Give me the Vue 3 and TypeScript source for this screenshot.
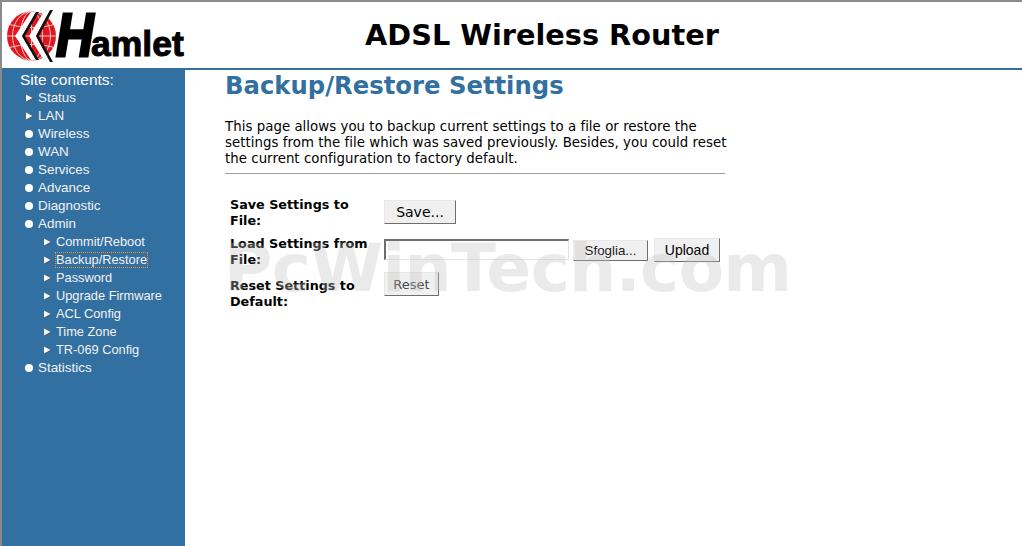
<template>
  <div class="page">
    <header class="top">
      <div class="logo">
        <svg class="globe" viewBox="0 0 50 52" width="50" height="52">
          <defs>
            <clipPath id="disc"><circle cx="24.5" cy="26" r="24.5" /></clipPath>
          </defs>
          <circle cx="24.5" cy="26" r="24.5" fill="#e0161e" />
          <g clip-path="url(#disc)" fill="none" stroke="#f6c4c6" stroke-width="1">
            <ellipse cx="24.5" cy="26" rx="11" ry="24.5" />
            <ellipse cx="24.5" cy="26" rx="19" ry="24.5" />
            <path d="M0 14q25 7 50 0M0 26h50M0 38q25-7 50 0M24.5 1v50" />
          </g>
          <path d="M8 26 24 2h5L15 26l14 24h-5z" fill="#fff" />
          <path d="M15 26 29 2h3L18 26l14 24h-3z" fill="#111" />
          <path d="M22 26 38 0h5L29 26l14 26h-5z" fill="#fff" />
          <path d="M29 26 43 0h3L32 26l14 26h-3z" fill="#111" />
        </svg>
        <span class="brand"><span class="brand-h">H</span>amlet</span>
      </div>
      <div class="product">ADSL Wireless Router</div>
    </header>
    <div class="main">
      <nav class="side">
        <div class="side-title">Site contents:</div>
        <div
          v-for="item in menu"
          :key="item.label"
          class="item"
          :class="{ sub: item.sub }"
        >
          <svg v-if="item.kind === 'arrow'" class="mark" viewBox="0 0 9 9" width="9" height="9">
            <path d="M1 .5 8.5 4.5 1 8.5z" fill="#555" />
            <path d="M1 .5 7.5 4 1 7.5z" fill="#f4f4f4" />
          </svg>
          <span v-else class="dot"></span>
          <span class="label" :class="{ focus: item.focus }">{{ item.label }}</span>
        </div>
      </nav>
      <main class="content">
        <h1>Backup/Restore Settings</h1>
        <p class="intro">
          This page allows you to backup current settings to a file or restore the
          settings from the file which was saved previously. Besides, you could reset
          the current configuration to factory default.
        </p>
        <div class="rule"></div>
        <div class="form">
          <div class="row row-save">
            <div class="name">Save Settings to File:</div>
            <button class="btn btn-save">Save...</button>
          </div>
          <div class="row row-load">
            <div class="name">Load Settings from File:</div>
            <div class="file"></div>
            <button class="btn btn-browse">Sfoglia...</button>
            <button class="btn btn-upload">Upload</button>
          </div>
          <div class="row row-reset">
            <div class="name">Reset Settings to Default:</div>
            <button class="btn btn-reset">Reset</button>
          </div>
        </div>
      </main>
    </div>
    <div class="watermark">PcWinTech.com</div>
  </div>
</template>

<script setup lang="ts">
interface MenuItem {
  label: string
  kind: 'arrow' | 'dot'
  sub?: boolean
  focus?: boolean
}

const menu: MenuItem[] = [
  { label: 'Status', kind: 'arrow' },
  { label: 'LAN', kind: 'arrow' },
  { label: 'Wireless', kind: 'dot' },
  { label: 'WAN', kind: 'dot' },
  { label: 'Services', kind: 'dot' },
  { label: 'Advance', kind: 'dot' },
  { label: 'Diagnostic', kind: 'dot' },
  { label: 'Admin', kind: 'dot' },
  { label: 'Commit/Reboot', kind: 'arrow', sub: true },
  { label: 'Backup/Restore', kind: 'arrow', sub: true, focus: true },
  { label: 'Password', kind: 'arrow', sub: true },
  { label: 'Upgrade Firmware', kind: 'arrow', sub: true },
  { label: 'ACL Config', kind: 'arrow', sub: true },
  { label: 'Time Zone', kind: 'arrow', sub: true },
  { label: 'TR-069 Config', kind: 'arrow', sub: true },
  { label: 'Statistics', kind: 'dot' },
]
</script>

<style>
html,
body {
  margin: 0;
  overflow: hidden;
}
</style>

<style scoped>
.page {
  position: relative;
  width: 1022px;
  height: 546px;
  box-sizing: border-box;
  border-top: 2px solid #8a8a8a;
  border-left: 2px solid #8a8a8a;
  background: #fff;
  overflow: hidden;
  display: flex;
  flex-direction: column;
}
.top {
  height: 66px;
  display: flex;
  border-bottom: 2px solid #3370a2;
  flex: none;
}
.logo {
  width: 183px;
  display: flex;
  align-items: flex-start;
  padding: 8px 0 0 5px;
  box-sizing: border-box;
  flex: none;
}
.globe {
  flex: none;
}
.brand {
  font-family: "Liberation Sans", sans-serif;
  font-weight: 700;
  font-size: 35.5px;
  line-height: 48px;
  color: #000;
  -webkit-text-stroke: 1px #000;
  margin: 1px 0 0 -1px;
  white-space: nowrap;
}
.brand-h {
  display: inline-block;
  width: 35px;
  font-size: 61px;
  font-style: italic;
  line-height: 48px;
  -webkit-text-stroke: 3px #000;
  transform: scaleX(0.85);
  transform-origin: left bottom;
}
.product {
  flex: 1;
  text-align: center;
  font-family: "DejaVu Sans", sans-serif;
  font-weight: 700;
  font-size: 28.75px;
  line-height: 66px;
  color: #000;
  padding-right: 123px;
  box-sizing: border-box;
  white-space: nowrap;
}
.main {
  flex: 1;
  display: flex;
  min-height: 0;
}
.side {
  width: 183px;
  flex: none;
  background: #3370a2;
  padding-top: 1px;
  box-sizing: border-box;
  font-family: "Liberation Sans", sans-serif;
  color: #fff;
}
.side-title {
  font-size: 15.5px;
  line-height: 18px;
  padding-left: 18px;
}
.item {
  height: 18px;
  display: flex;
  align-items: center;
  padding-left: 23px;
  font-size: 13.4px;
  line-height: 18px;
}
.item.sub {
  padding-left: 41px;
  font-size: 12.8px;
}
.mark {
  width: 9px;
  flex: none;
  margin-right: 4px;
}
.dot {
  width: 8px;
  height: 8px;
  border-radius: 50%;
  background: #fff;
  margin: 0 5px 0 0;
  flex: none;
}
.label {
  border: 1px solid transparent;
  line-height: 14px;
  margin-left: -1px;
  color: #f2f2f2;
}
.item.sub .label {
  margin-left: 0;
}
.item.sub .mark {
  margin-right: 3px;
}
.label.focus {
  border: 1px dotted #f58a1f;
}
.content {
  padding-left: 40px;
  width: 500px;
  font-family: "DejaVu Sans", sans-serif;
  font-size: 13.33px;
  color: #000;
}
h1 {
  margin: 1px 0 0;
  font-size: 24.3px;
  line-height: 30px;
  font-weight: 700;
  color: #3370a2;
  white-space: nowrap;
}
.intro {
  margin: 18px -4px 0 0;
  line-height: 16px;
  letter-spacing: 0.04px;
  white-space: normal;
}
.rule {
  height: 1px;
  background: #a0a0a0;
  margin-top: 6px;
}
.form {
  margin-top: 23px;
}
.row {
  display: flex;
  align-items: flex-start;
}
.row-save {
  height: 39px;
}
.row-load {
  height: 42px;
}
.name {
  width: 159px;
  padding-left: 5px;
  box-sizing: border-box;
  font-weight: 700;
  font-size: 12.75px;
  line-height: 16px;
  padding-right: 14px;
  flex: none;
}
.btn {
  appearance: none;
  padding: 0;
  box-sizing: border-box;
  background: #f0f0f0;
  border: 1px solid;
  border-color: #e8e8e8 #6e6e6e #6e6e6e #e8e8e8;
  color: #000;
  height: 24px;
  font-family: "DejaVu Sans", sans-serif;
  font-size: 13px;
  flex: none;
}
.btn-save {
  width: 72px;
  font-size: 14px;
  margin-top: 3px;
}
.file {
  width: 185px;
  height: 21px;
  box-sizing: border-box;
  border-top: 2px solid #6e6e6e;
  border-left: 2px solid #6e6e6e;
  border-right: 1px solid #e4e4e4;
  border-bottom: 1px solid #e4e4e4;
  background: #fff;
  margin-top: 3px;
  flex: none;
}
.btn-browse {
  width: 75px;
  height: 21px;
  margin: 4px 0 0 4px;
  font-family: "Liberation Sans", sans-serif;
  font-size: 13.33px;
  color: #222;
}
.btn-upload {
  width: 66px;
  margin: 2px 0 0 6px;
  font-family: "Liberation Sans", sans-serif;
  font-size: 14px;
}
.btn-reset {
  width: 55px;
  margin-top: -6px;
  color: #444;
}
.watermark {
  position: absolute;
  left: 222px;
  top: 231px;
  font-family: "DejaVu Sans", sans-serif;
  font-weight: 700;
  font-size: 66px;
  line-height: 72px;
  letter-spacing: -0.6px;
  color: rgba(190, 190, 190, 0.33);
  white-space: nowrap;
  pointer-events: none;
}
</style>
